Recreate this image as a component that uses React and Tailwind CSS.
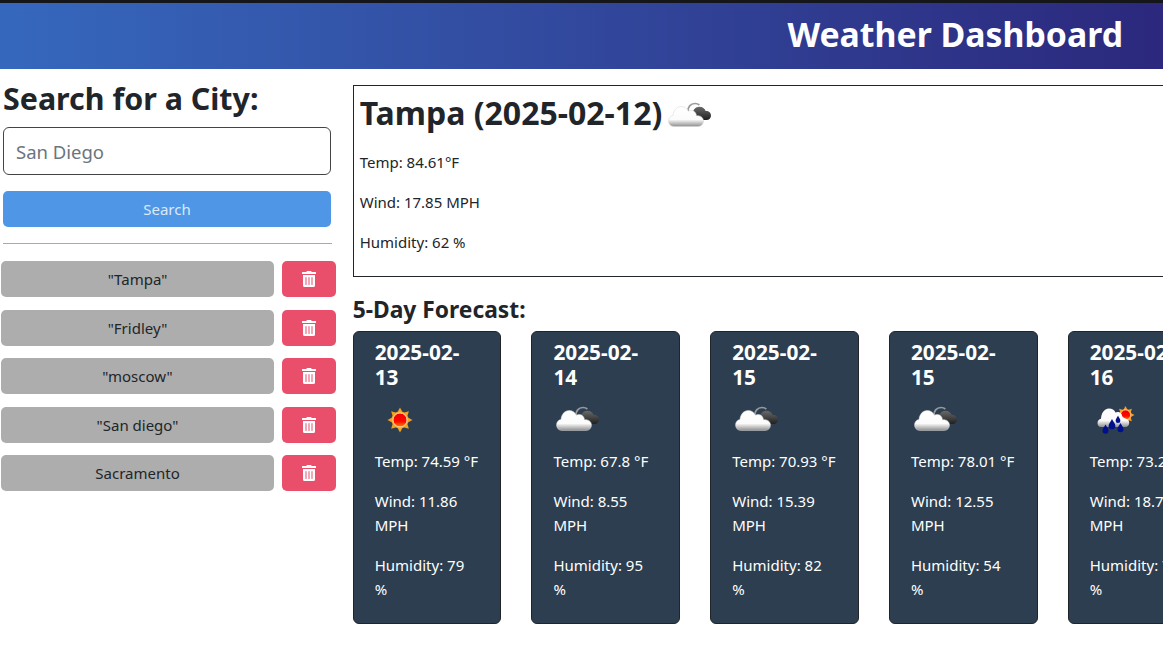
import { FaTrashAlt } from 'react-icons/fa'

const cities = ['"Tampa"', '"Fridley"', '"moscow"', '"San diego"', 'Sacramento']

const forecast = [
  { date: '2025-02-13', icon: 'sun', temp: '74.59', wind: '11.86', humidity: '79' },
  { date: '2025-02-14', icon: 'cloud', temp: '67.8', wind: '8.55', humidity: '95' },
  { date: '2025-02-15', icon: 'cloud', temp: '70.93', wind: '15.39', humidity: '82' },
  { date: '2025-02-15', icon: 'cloud', temp: '78.01', wind: '12.55', humidity: '54' },
  { date: '2025-02-16', icon: 'rain', temp: '73.2', wind: '18.7', humidity: '78' },
]

const CLOUD = 'M9 35.500c-3.500 0-5.500-2.700-5.500-5.700 0-2.800 2-5 4.500-5.400.4-4.900 3.600-8.900 8.200-8.900 3.200 0 5.800 1.800 7.200 4.700 1-.6 2.200-.9 3.400-.7 2.700.4 4.500 2.500 4.700 5.200 4-.4 7 1.900 7 5.400 0 3-2.200 5.400-5.500 5.400Z'

function SunShape({ cx, cy, scale = 1 }) {
  const rays = [0, 45, 90, 135, 180, 225, 270, 315]
  return (
    <g transform={`translate(${cx} ${cy}) scale(${scale})`}>
      {rays.map((r) => (
        <polygon key={r} points="-3.500,-6 0,-12.500 3.500,-6" fill="#f5a01f" transform={`rotate(${r})`} />
      ))}
      <circle r="8.500" fill="#f7a828" />
      <circle r="7" fill="url(#sunFill)" stroke="#fde3b8" strokeWidth="0.9" />
    </g>
  )
}

function WeatherIcon({ type }) {
  return (
    <svg viewBox="0 0 50 50" className="h-[50px] w-[50px] shrink-0">
      <defs>
        <linearGradient id="sunFill" x1="0" y1="0" x2="0" y2="1">
          <stop offset="0" stopColor="#f00000" />
          <stop offset="0.6" stopColor="#fb0a00" />
          <stop offset="1" stopColor="#ff8a00" />
        </linearGradient>
        <linearGradient id="cloudFill" x1="0" y1="0" x2="0" y2="1">
          <stop offset="0" stopColor="#ffffff" />
          <stop offset="0.65" stopColor="#fbfbfb" />
          <stop offset="1" stopColor="#8f8f8f" />
        </linearGradient>
        <linearGradient id="darkFill" x1="0" y1="0" x2="0" y2="1">
          <stop offset="0" stopColor="#6a6a6a" />
          <stop offset="1" stopColor="#1f1f1f" />
        </linearGradient>
      </defs>
      {type === 'sun' && <SunShape cx={25} cy={25} />}
      {type === 'cloud' && (
        <>
          <path d="M23 21c-.5-5 2.500-8.500 7-8.500 1.800 0 3.300.6 4.300 1.500" fill="none" stroke="#9a9a9a" strokeWidth="1.700" />
          <path d="M24 29c-.5-2.500 1-5 3.500-5.200-.1-4.500 3-8 7-8 3 0 5.300 1.700 6.200 4.200 3.200-.2 5.300 2 5.300 4.500 0 2.500-1.800 4.500-4.500 4.500Z" fill="url(#darkFill)" />
          <path d={CLOUD} fill="url(#cloudFill)" stroke="#d4d4d4" strokeWidth="0.500" />
        </>
      )}
      {type === 'rain' && (
        <>
          <SunShape cx={35.500} cy={20} scale={0.72} />
          <path d="M11 32c-2.300 0-3.500-2-3.500-4s1.500-4 3.500-4.200c.2-5 3-10.300 8-10.300 3 0 5.400 1.600 6.500 4 1-.5 2-.7 3-.5 2.200.3 3.500 2 3.700 4.200 1 1 1.500 1.800 3 2.300 2.500.2 4 2 4 4.300 0 2.500-1.500 4.200-4 4.200Z" fill="url(#cloudFill)" />
          {[[15.500, 35, 1.200], [22, 30, 1.350], [30.500, 33.500, 1.200], [28, 25, 0.950]].map(([x, y, s]) => (
            <path
              key={x}
              d="M0-4.500C1 -2.500 2.500 -1 2.500 .7a2.500 2.500 0 0 1-5 0C-2.500 -1-1 -2.500 0-4.500Z"
              fill="#00108c"
              transform={`translate(${x} ${y}) scale(${s})`}
            />
          ))}
        </>
      )}
    </svg>
  )
}

function ForecastCard({ day }) {
  return (
    <div className="w-[148.750px] shrink-0 rounded-md border border-[#212529] bg-[#2c3e50] px-[21px] pt-2 pb-[6px] text-white">
      <h5 className="mb-[5px] max-w-[105px] text-[20.800px] leading-[25px] font-bold">{day.date}</h5>
      <WeatherIcon type={day.icon} />
      <p className="mt-1 mb-4">Temp: {day.temp} °F</p>
      <p className="mb-4">Wind: {day.wind} MPH</p>
      <p className="mb-4">Humidity: {day.humidity} %</p>
    </div>
  )
}

export default function App() {
  return (
    <div className="h-[646px] overflow-hidden bg-white font-['Noto_Sans','Open_Sans',sans-serif] text-[15px] leading-6 text-[#212529]">
      <header className="flex h-[69px] items-center justify-end border-t-[3px] border-[#14161a] bg-gradient-to-r from-[#3568bd] to-[#2b287d] pr-10">
        <h1 className="pb-[5px] text-[33.800px] leading-10 font-bold text-white">Weather Dashboard</h1>
      </header>
      <div className="flex items-start">
        <aside className="ml-px w-[335px] shrink-0">
          <div className="px-[2px] pt-[11px]">
            <h2 className="mb-[9px] text-[30.400px] leading-[38px] font-bold">Search for a City:</h2>
            <input
              placeholder="San Diego"
              className="block h-12 w-[328px] rounded-md border border-[#444] px-3 text-[18.500px] placeholder:text-[#6c757d]"
            />
            <button className="mt-4 h-9 w-[328px] rounded-[5px] bg-[#4f97e6] text-[#dbe9f8]">Search</button>
            <hr className="mt-4 w-[329px] border-[#aaa]" />
          </div>
          <ul className="mt-[17px] flex flex-col gap-[12.500px]">
            {cities.map((city) => (
              <li key={city} className="flex gap-2">
                <button className="h-9 w-[273px] rounded-[5px] bg-[#adadad]">{city}</button>
                <button className="flex h-9 w-[54px] items-center justify-center rounded-[5px] bg-[#e94f6a] text-white">
                  <FaTrashAlt size={16} />
                </button>
              </li>
            ))}
          </ul>
        </aside>
        <main className="ml-[16.700px] w-[840px] shrink-0 pt-4">
          <section className="h-[192px] border border-[#212529] px-[6px] pt-[5px]">
            <div className="mb-[9px] flex h-[50px] items-center gap-[3px]">
              <h2 className="-mt-[6px] text-[32px] leading-[38px] font-bold">Tampa (2025-02-12)</h2>
              <WeatherIcon type="cloud" />
            </div>
            <p className="mb-4">Temp: 84.61°F</p>
            <p className="mb-4">Wind: 17.85 MPH</p>
            <p>Humidity: 62 %</p>
          </section>
          <h3 className="mt-[18px] mb-[7px] text-[22.800px] leading-[29px] font-bold">5-Day Forecast:</h3>
          <div className="flex gap-[30px]">
            {forecast.map((day) => (
              <ForecastCard key={day.date + day.temp} day={day} />
            ))}
          </div>
        </main>
      </div>
    </div>
  )
}
